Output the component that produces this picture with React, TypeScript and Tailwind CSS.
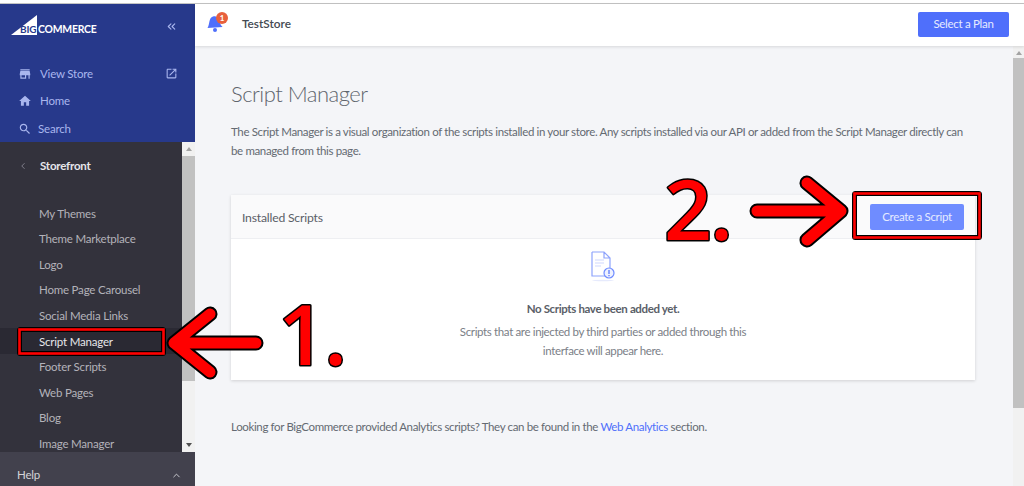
import React from 'react';
import { ChevronLeft, ChevronUp, ChevronsLeft } from 'lucide-react';

const STOREFRONT_LINKS = [
  'My Themes',
  'Theme Marketplace',
  'Logo',
  'Home Page Carousel',
  'Social Media Links',
  'Script Manager',
  'Footer Scripts',
  'Web Pages',
  'Blog',
  'Image Manager',
];

const MaterialIcon = ({ d, size, className }: { d: string; size: number; className?: string }) => (
  <svg width={size} height={size} viewBox="0 0 24 24" fill="currentColor" className={className}>
    <path d={d} />
  </svg>
);

const Logo = () => (
  <div className="relative h-[24px] w-[90px]">
    <svg width="28" height="21" viewBox="0 0 28 21" className="absolute left-0 top-0">
      <path d="M0 20 L26 0 V20 Z" fill="#ffffff" />
    </svg>
    <span className="absolute left-[9px] top-[8px] text-[10px] leading-[12px] font-bold text-[#27398b]">BIG</span>
    <span className="absolute left-[27px] top-[8px] text-[10.4px] leading-[12px] font-bold text-white">COMMERCE</span>
  </div>
);

const Sidebar = () => (
  <aside className="flex w-[195px] shrink-0 flex-col bg-[#33323c] text-[11.5px] tracking-[-0.2px]">
    <div className="h-[138px] bg-[#27398b] pl-[11px] pr-[17px]">
      <div className="flex h-[46px] items-center justify-between">
        <Logo />
        <ChevronsLeft size={13} className="mb-[2px] text-[#a9b6ee]" />
      </div>
      <div className="ml-[7px] mt-[10px] flex flex-col text-[#a9b6ee]">
        <div className="flex h-[27px] items-center">
          <MaterialIcon size={14} d="M20 4H4v2h16V4zm1 10v-2l-1-5H4l-1 5v2h1v6h10v-6h4v6h2v-6h1zm-9 4H6v-4h6v4z" />
          <span className="ml-[8px] flex-1">View Store</span>
          <MaterialIcon size={13} d="M19 19H5V5h7V3H5c-1.11 0-2 .9-2 2v14c0 1.1.89 2 2 2h14c1.1 0 2-.9 2-2v-7h-2v7zM14 3v2h3.59l-9.83 9.83 1.41 1.41L19 6.41V10h2V3h-7z" />
        </div>
        <div className="flex h-[28px] items-center">
          <MaterialIcon size={14} d="M10 20v-6h4v6h5v-8h3L12 3 2 12h3v8z" />
          <span className="ml-[8px]">Home</span>
        </div>
        <div className="flex h-[27px] items-center">
          <MaterialIcon size={14} d="M15.5 14h-.79l-.28-.27C15.41 12.59 16 11.11 16 9.5 16 5.91 13.09 3 9.5 3S3 5.91 3 9.5 5.91 16 9.5 16c1.61 0 3.09-.59 4.23-1.57l.27.28v.79l5 4.99L20.49 19l-4.99-5zm-6 0C7.01 14 5 11.99 5 9.5S7.01 5 9.5 5 14 7.01 14 9.5 11.99 14 9.5 14z" />
          <span className="ml-[6px]">Search</span>
        </div>
      </div>
    </div>
    <div className="flex h-[310px] shrink-0">
      <div className="w-[182px] overflow-hidden">
        <div className="flex h-[48px] items-center pl-[18px] text-[#8d8c97]">
          <ChevronLeft size={10} />
          <span className="ml-[12px] font-bold text-[#e6e6ea]">Storefront</span>
        </div>
        <div className="mt-[10.5px] flex flex-col">
          {STOREFRONT_LINKS.map(link => (
            <div
              key={link}
              className={`flex h-[25.6px] items-center pl-[39px] ${link === 'Script Manager' ? 'bg-[#2a2933] text-[#e6e6ea]' : 'text-[#b3b2ba]'}`}
            >
              {link}
            </div>
          ))}
        </div>
      </div>
      <div className="flex w-[13px] flex-col items-center bg-[#f1f1f1]">
        <span className="mt-[5px] h-0 w-0 border-x-[3px] border-b-[4px] border-x-transparent border-b-[#a3a3a3]" />
        <span className="mt-[5px] h-[225px] w-full bg-[#c1c1c1]" />
        <span className="mt-auto mb-[5px] h-0 w-0 border-x-[3px] border-t-[4px] border-x-transparent border-t-[#505050]" />
      </div>
    </div>
    <div className="flex flex-1 items-center justify-between bg-[#42414d] pl-[17px] pr-[13px] pt-[12px] text-[#d3d3d8]">
      <span>Help</span>
      <ChevronUp size={11} />
    </div>
  </aside>
);

const Header = () => (
  <header className="relative z-10 flex h-[42px] shrink-0 items-center bg-white pb-[2px] pl-[12px] pr-[15px] shadow-[0_1px_3px_rgba(0,0,0,0.12)]">
    <div className="relative h-[20px] w-[20px]">
      <svg width="16" height="18" viewBox="0 0 16 18" className="absolute left-0 top-[1px]">
        <path d="M0.5 13 C3 9 1.5 3 6 1.5 C11 0 12 5 13 8 C13.5 10 15 11 15.5 12 Z" fill="#4f6ffb" />
        <circle cx="8" cy="15" r="2" fill="#4f6ffb" />
      </svg>
      <span className="absolute left-[9px] top-[-2px] flex h-[12px] w-[12px] items-center justify-center rounded-full bg-[#e8603c] text-[8px] font-bold text-white">1</span>
    </div>
    <span className="ml-[15px] flex-1 text-[11.8px] font-semibold text-[#444a52]">TestStore</span>
    <button className="h-[25px] w-[91px] rounded-[2px] bg-[#4f6ffb] text-[11.5px] tracking-[-0.3px] text-[#e6ebff]">Select a Plan</button>
  </header>
);

const EmptyIcon = () => (
  <svg width="26" height="32" viewBox="0 0 26 32" fill="none">
    <path d="M2 2 H14 L20 8 V20 M14 2 V8 H20 M15 26 H2 V2" stroke="#8ea3fc" strokeWidth="1.2" />
    <path d="M5 10 H14 M5 13 H14 M5 16 H11" stroke="#dfe5fe" strokeWidth="1.5" />
    <circle cx="19" cy="23" r="5" fill="#eef1ff" stroke="#6f8cff" strokeWidth="1.2" />
    <path d="M19 20 V24 M19 25 V26.2" stroke="#4f6ffb" strokeWidth="1.2" />
    <ellipse cx="13" cy="30.5" rx="11" ry="0.8" fill="#e6eafc" />
  </svg>
);

const Card = () => (
  <section className="mt-[35px] h-[185px] w-[744px] bg-white shadow-[0_1px_3px_rgba(0,0,0,0.15)]">
    <div className="flex h-[44px] items-center justify-between border-b border-[#eeeff2] bg-[#fafafb] pl-[11px] pr-[11px]">
      <h2 className="pt-[3px] text-[12.2px] tracking-[-0.2px] text-[#5a6068]">Installed Scripts</h2>
      <button className="h-[26px] w-[94px] rounded-[2px] bg-[#6f8cff] text-[11.5px] tracking-[-0.3px] text-[#e6ebff]">Create a Script</button>
    </div>
    <div className="flex flex-col items-center pt-[11px]">
      <EmptyIcon />
      <p className="mt-[18px] text-[11.5px] font-bold text-[#5a6068]">No Scripts have been added yet.</p>
      <p className="mt-[5px] w-[310px] text-center text-[11.5px] leading-[19px] text-[#7b8087]">
        Scripts that are injected by third parties or added through this interface will appear here.
      </p>
    </div>
  </section>
);

const Annotations = () => (
  <div className="pointer-events-none absolute inset-0 z-20">
    <svg width="1024" height="486" className="absolute left-0 top-0">
      <rect x="19.5" y="329.5" width="144" height="24" fill="none" stroke="#000" strokeWidth="5" rx="1" />
      <rect x="19.5" y="329.5" width="144" height="24" fill="none" stroke="#f00" strokeWidth="2.6" />
      <rect x="854.5" y="193.5" width="125" height="44" fill="none" stroke="#000" strokeWidth="5" rx="1" />
      <rect x="854.5" y="193.5" width="125" height="44" fill="none" stroke="#f00" strokeWidth="2.6" />
      <path d="M256 343 H176 M210 314 L174 343 L210 372" fill="none" stroke="#000" strokeWidth="15" strokeLinecap="round" strokeLinejoin="round" />
      <path d="M256 343 H176 M210 314 L174 343 L210 372" fill="none" stroke="#f00" strokeWidth="11" strokeLinecap="round" strokeLinejoin="round" />
      <path d="M757 211 H838 M807 183 L841 211 L807 240" fill="none" stroke="#000" strokeWidth="15" strokeLinecap="round" strokeLinejoin="round" />
      <path d="M757 211 H838 M807 183 L841 211 L807 240" fill="none" stroke="#f00" strokeWidth="11" strokeLinecap="round" strokeLinejoin="round" />
      <text x="278" y="365" fill="#f00" stroke="#000" strokeWidth="3" strokeLinejoin="round" paintOrder="stroke" fontFamily="Open Sans, sans-serif" fontWeight="600" fontSize="84" letterSpacing="-2">1.</text>
      <text x="664" y="240" fill="#f00" stroke="#000" strokeWidth="3" strokeLinejoin="round" paintOrder="stroke" fontFamily="Open Sans, sans-serif" fontWeight="600" fontSize="84" letterSpacing="-2">2.</text>
    </svg>
  </div>
);

const App: React.FC = () => {
  return (
    <div className="relative h-[486px] w-[1024px] overflow-hidden bg-white font-['Lato',sans-serif]">
      <div className="h-[4px] border-b border-[#c4c4c4] bg-white" />
      <div className="flex h-[482px]">
        <Sidebar />
        <div className="flex min-w-0 flex-1 flex-col">
          <Header />
          <div className="flex flex-1 bg-[#f4f5f8]">
            <main className="flex-1 pl-[36px] pt-[33px] text-[11.5px] tracking-[-0.36px]">
              <h1 className="text-[22px] leading-[30px] font-light tracking-[-0.5px] text-[#5f656d]">Script Manager</h1>
              <p className="mt-[13px] w-[745px] leading-[19px] text-[#646a72]">
                The Script Manager is a visual organization of the scripts installed in your store. Any scripts installed via our API or added from the Script Manager directly can be managed from this page.
              </p>
              <Card />
              <p className="mt-[37px] leading-[19px] text-[#646a72]">
                Looking for BigCommerce provided Analytics scripts? They can be found in the <span className="text-[#4f6ffb]">Web Analytics</span> section.
              </p>
            </main>
            <div className="flex w-[11px] flex-col items-center bg-[#f1f1f1]">
              <span className="mt-[5px] h-0 w-0 border-x-[3px] border-b-[4px] border-x-transparent border-b-[#a3a3a3]" />
              <span className="mt-[3px] h-[350px] w-full bg-[#c1c1c1]" />
            </div>
          </div>
        </div>
      </div>
      <Annotations />
    </div>
  );
};

export default App;
